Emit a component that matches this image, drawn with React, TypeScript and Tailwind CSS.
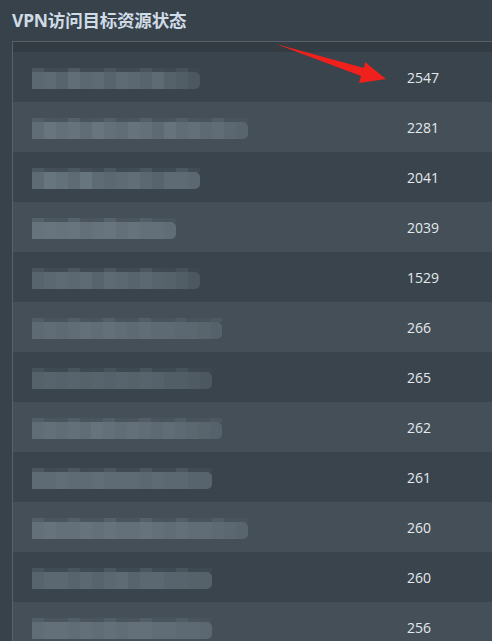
import React from "react";

const rows: { v: string; w: number; shades: number[] }[] = [
  { v: "2547", w: 168, shades: [0.55, 0.6, 0.5, 0.65, 0.55, 0.6, 0.5, 0.6, 0.55, 0.5, 0.6, 0.45, 0.4, 0.3] },
  { v: "2281", w: 216, shades: [0.55, 0.7, 0.6, 0.65, 0.55, 0.7, 0.6, 0.55, 0.65, 0.6, 0.5, 0.65, 0.55, 0.6, 0.5, 0.55, 0.45, 0.4] },
  { v: "2041", w: 168, shades: [0.6, 0.75, 0.7, 0.6, 0.75, 0.6, 0.55, 0.6, 0.65, 0.55, 0.5, 0.6, 0.6, 0.55] },
  { v: "2039", w: 144, shades: [0.65, 0.7, 0.65, 0.7, 0.6, 0.65, 0.7, 0.6, 0.65, 0.6, 0.6, 0.55] },
  { v: "1529", w: 168, shades: [0.5, 0.55, 0.6, 0.55, 0.6, 0.5, 0.6, 0.55, 0.5, 0.55, 0.5, 0.45, 0.4, 0.3] },
  { v: "266", w: 190, shades: [0.5, 0.55, 0.5, 0.55, 0.6, 0.55, 0.6, 0.55, 0.5, 0.55, 0.5, 0.5, 0.45, 0.45, 0.4, 0.35] },
  { v: "265", w: 180, shades: [0.45, 0.5, 0.45, 0.5, 0.45, 0.5, 0.45, 0.5, 0.45, 0.5, 0.45, 0.4, 0.4, 0.35, 0.3] },
  { v: "262", w: 190, shades: [0.55, 0.6, 0.55, 0.6, 0.55, 0.65, 0.6, 0.55, 0.6, 0.55, 0.5, 0.55, 0.5, 0.45, 0.4, 0.35] },
  { v: "261", w: 180, shades: [0.6, 0.6, 0.65, 0.6, 0.6, 0.65, 0.6, 0.6, 0.6, 0.55, 0.6, 0.55, 0.55, 0.5, 0.5] },
  { v: "260", w: 216, shades: [0.6, 0.65, 0.6, 0.6, 0.65, 0.6, 0.65, 0.6, 0.6, 0.65, 0.6, 0.55, 0.6, 0.55, 0.55, 0.5, 0.45, 0.4] },
  { v: "260", w: 180, shades: [0.5, 0.55, 0.55, 0.5, 0.55, 0.5, 0.55, 0.6, 0.5, 0.55, 0.55, 0.5, 0.5, 0.45, 0.45] },
  { v: "256", w: 180, shades: [0.55, 0.6, 0.6, 0.55, 0.6, 0.55, 0.6, 0.55, 0.6, 0.6, 0.55, 0.55, 0.5, 0.5, 0.45] },
];

function Blur({ w, shades }: { w: number; shades: number[] }) {
  const seg = w / shades.length;
  return (
    <div className="flex flex-col" style={{ width: w }}>
      <div className="flex h-[4px] opacity-50">
        {shades.map((s, i) => (
          <div key={i} className="h-full" style={{ width: seg, background: `rgba(120,135,145,${(i % 3 === 0 ? s : s * 0.4).toFixed(2)})` }} />
        ))}
      </div>
      <div className="flex h-[17px] overflow-hidden rounded-r-[5px]">
        {shades.map((s, i) => (
          <div key={i} className="h-full" style={{ width: seg, background: `rgba(125,140,150,${(s * 0.9).toFixed(2)})` }} />
        ))}
      </div>
    </div>
  );
}

export default function App() {
  return (
    <div
      className="relative h-[641px] w-[492px] overflow-hidden bg-[#38424a]"
      style={{ fontFamily: '"Open Sans", "Noto Sans CJK SC", "Noto Sans", sans-serif' }}
    >
      <div className="flex h-[41px] items-center pl-[12px] pb-[1px]">
        <span className="text-[17.5px] font-bold text-[#cfdbe6] tracking-[-0.2px]" style={{ fontFamily: '"Noto Sans", "Noto Sans CJK SC", sans-serif' }}>
          VPN访问目标资源状态
        </span>
      </div>
      <div className="ml-[12px] border-l border-t border-[#56626b]">
        <div className="h-[10px] bg-[#333c43]" />
        {rows.map((r, i) => (
          <div
            key={i}
            className={`flex h-[50px] items-center ${i % 2 === 0 ? "bg-[#3a444c]" : "bg-[#444f57]"}`}
          >
            <div className="w-[394px] pl-[19px] pt-[2px]">
              <Blur w={r.w} shades={r.shades} />
            </div>
            <div className="text-[14px] text-[#e3e9ee]">{r.v}</div>
          </div>
        ))}
      </div>
      <svg className="pointer-events-none absolute left-0 top-0" width="492" height="641">
        <polygon points="276,44 364,68 365,62 386,79 359,83 361,76" fill="#f0201c" />
      </svg>
    </div>
  );
}
